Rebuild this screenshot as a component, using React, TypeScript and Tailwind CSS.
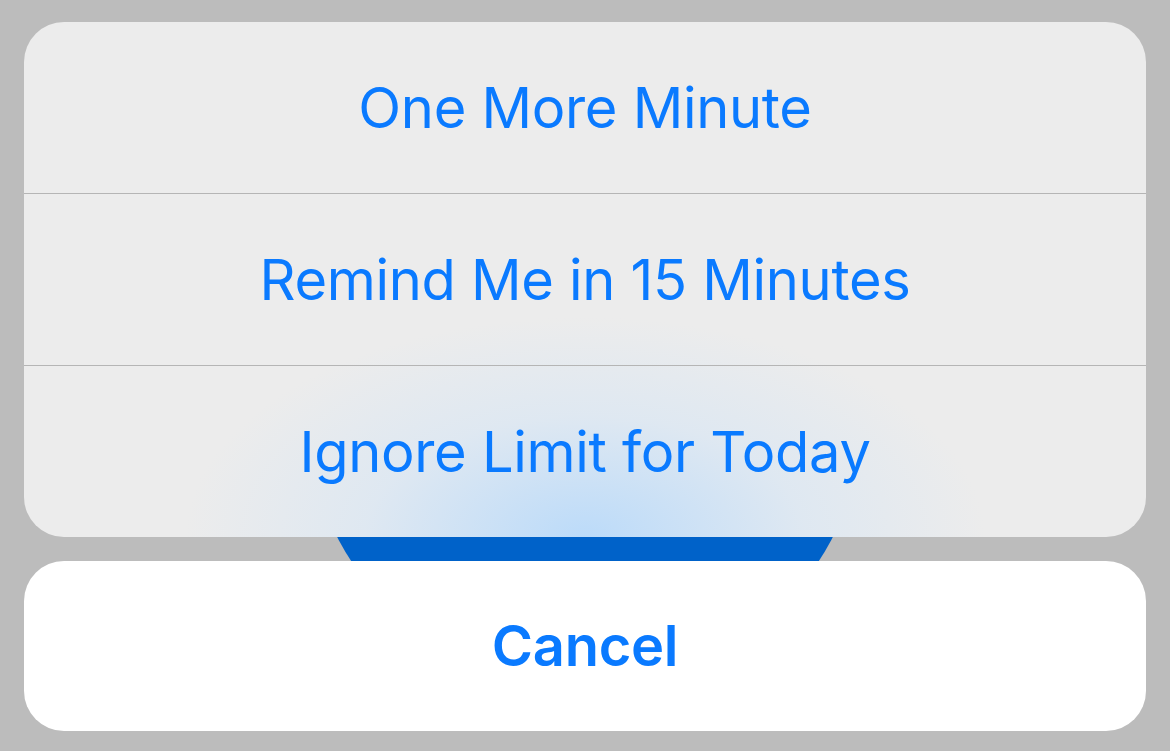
const options = ["One More Minute", "Remind Me in 15 Minutes", "Ignore Limit for Today"];

export default function App() {
  return (
    <div
      className="relative min-h-[751px] w-full overflow-hidden bg-[#bcbcbc] px-6 pt-[22px]"
      style={{ fontFamily: "Inter, 'Noto Sans', sans-serif" }}
    >
      {/* blue button behind the sheet */}
      <div className="absolute left-[306px] top-[130px] h-[558px] w-[558px] rounded-full bg-[#0062c9]" />

      <div className="relative flex flex-col gap-6">
        <div className="relative overflow-hidden rounded-[40px] bg-[#ececec]">
          <div className="pointer-events-none absolute inset-0 bg-[radial-gradient(ellipse_400px_220px_at_50%_100%,rgba(185,218,250,0.95),rgba(212,229,246,0.55)_55%,rgba(236,236,236,0)_100%)]" />
          {options.map((label, i) => (
            <div
              key={label}
              className={`relative flex items-center justify-center text-[56px] tracking-[-0.3px] text-[#0a7aff] ${
                i > 0 ? "h-[172px] border-t border-[#b5b5b5]" : "h-[171px]"
              }`}
            >
              {label}
            </div>
          ))}
        </div>

        <div className="flex h-[170px] items-center justify-center rounded-[40px] bg-white text-[56px] font-semibold tracking-[-0.3px] text-[#0a7aff]">
          Cancel
        </div>
      </div>
    </div>
  );
}
